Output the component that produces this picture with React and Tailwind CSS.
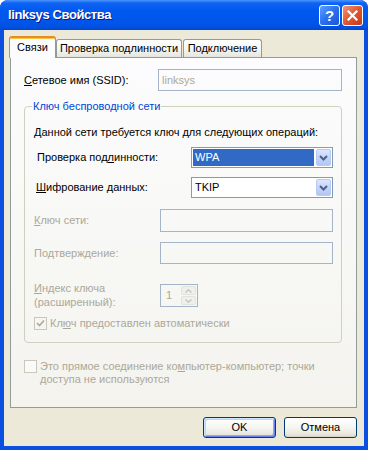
function Chevron() {
  return (
    <svg width="9" height="6" viewBox="0 0 9 6">
      <path d="M1 1 L4.5 4.5 L8 1" fill="none" stroke="#4D6185" strokeWidth="2" />
    </svg>
  );
}

function Combo({ value, selected }) {
  return (
    <div className="w-[142px] h-[21px] border border-[#7F9DB9] bg-white flex p-[1px]">
      <div
        className={
          selected
            ? "flex-1 flex items-center pl-[2px] bg-[#316AC5] text-white"
            : "flex-1 flex items-center pl-[2px] text-black"
        }
      >
        {value}
      </div>
      <div className="w-[15px] ml-[2px] rounded-[2px] border border-[#B9CAF3] bg-[linear-gradient(to_bottom,#DCE6FD_0%,#C3D3FB_50%,#B3C7F5_100%)] flex items-center justify-center">
        <Chevron />
      </div>
    </div>
  );
}

function CheckMark() {
  return (
    <svg width="9" height="9" viewBox="0 0 9 9">
      <path d="M1 4 L3.5 6.5 L8 1.5" fill="none" stroke="#ACA899" strokeWidth="1.6" />
    </svg>
  );
}

export default function App() {
  return (
    <div className="w-[368px] h-[450px] bg-white font-['Liberation_Sans',Arial,sans-serif] text-[11px] leading-[13px] text-black">
      <div className="w-full h-full flex flex-col rounded-t-[8px] overflow-hidden bg-[#0A4FE0]">
        {/* Title bar */}
        <div className="h-[30px] shrink-0 flex items-center pl-[8px] pr-[5px] bg-[linear-gradient(to_bottom,#4A96FD_0%,#0E64F4_10%,#0059EE_35%,#0056EA_70%,#0051E2_90%,#0046CC_100%)]">
          <span className="flex-1 text-white font-bold text-[13px] leading-[16px] tracking-[-0.4px] [text-shadow:1px_1px_0_#0A1883]">
            linksys Свойства
          </span>
          <div className="flex gap-[2px]">
            <div className="w-[21px] h-[21px] rounded-[3px] border border-white bg-[linear-gradient(135deg,#5EA0FF_0%,#2B6FEE_50%,#1A57D6_100%)] flex items-center justify-center">
              <span className="text-white font-bold text-[15px] leading-[15px]">?</span>
            </div>
            <div className="w-[21px] h-[21px] rounded-[3px] border border-white bg-[linear-gradient(135deg,#F0957A_0%,#E1572F_50%,#C23A18_100%)] flex items-center justify-center">
              <svg width="11" height="11" viewBox="0 0 11 11">
                <path d="M1.5 1.5 L9.5 9.5 M9.5 1.5 L1.5 9.5" stroke="white" strokeWidth="2.2" strokeLinecap="square" />
              </svg>
            </div>
          </div>
        </div>

        {/* Client area */}
        <div className="flex-1 mx-[4px] mb-[4px] bg-[#ECE9D8] flex flex-col pt-[6px] pl-[6px] pr-[7px]">
          {/* Tabs */}
          <div className="h-[21px] flex items-end -ml-[1px]">
            <div className="relative z-10 w-[47px] h-[22px] -mb-[1px] bg-[#FCFCFE] border-x border-[#919B9C] border-t-2 border-t-[#E68B2C] rounded-t-[3px] shadow-[inset_0_1px_0_#FFC73C] flex items-center justify-center pb-[1px]">
              Связи
            </div>
            <div className="w-[126px] h-[18px] bg-[linear-gradient(to_bottom,#FFFFFF_0%,#F3F3EF_60%,#E6E5DE_100%)] border-x border-t border-[#919B9C] rounded-t-[3px] flex items-center justify-center">
              Проверка подлинности
            </div>
            <div className="w-[79px] h-[18px] ml-[1px] bg-[linear-gradient(to_bottom,#FFFFFF_0%,#F3F3EF_60%,#E6E5DE_100%)] border-x border-t border-[#919B9C] rounded-t-[3px] flex items-center justify-center">
              Подключение
            </div>
          </div>

          {/* Panel */}
          <div className="h-[351px] border border-[#919B9C] bg-[linear-gradient(to_bottom,#FCFCFE_0%,#F7F7F4_60%,#F4F3EE_100%)] flex flex-col">
            <div className="mt-[11px] pl-[13px] h-[22px] flex items-center">
              <div className="w-[134px]">
                <u>С</u>етевое имя (SSID):
              </div>
              <div className="w-[184px] h-[22px] border border-[#A5B4C9] flex items-center pl-[3px] text-[#ACA899]">
                linksys
              </div>
            </div>

            <fieldset className="mt-[8px] ml-[13px] w-[318px] border border-[#D0D0BF] rounded-[4px] pl-[9px] pr-[7px] pb-[12px]">
              <legend className="-ml-[2px] px-[1px] text-[#0046D5] leading-[14px]">
                Ключ беспроводной сети
              </legend>
              <div className="mt-[12px] h-[14px] leading-[14px]">
                Данной сети требуется ключ для следующих операций:
              </div>
              <div className="mt-[8px] h-[21px] flex items-center">
                <div className="w-[157px] pl-[3px]">
                  Проверка под<u>л</u>инности:
                </div>
                <Combo value="WPA" selected />
              </div>
              <div className="mt-[9px] h-[21px] flex items-center">
                <div className="w-[157px] pl-[2px]">
                  <u>Ш</u>ифрование данных:
                </div>
                <Combo value="TKIP" />
              </div>
              <div className="mt-[11px] h-[23px] flex items-center text-[#ACA899]">
                <div className="w-[126px]">
                  <u>К</u>люч сети:
                </div>
                <div className="w-[173px] h-[23px] border border-[#A5B4C9]" />
              </div>
              <div className="mt-[10px] h-[22px] flex items-center text-[#ACA899]">
                <div className="w-[126px]">Подтверждение:</div>
                <div className="w-[173px] h-[22px] border border-[#A5B4C9]" />
              </div>
              <div className="mt-[17px] flex items-start text-[#ACA899]">
                <div className="w-[126px] leading-[14px]">
                  <u>И</u>ндекс ключа
                  <br />
                  (расширенный):
                </div>
                <div className="mt-[3px] w-[38px] h-[23px] border border-[#A5B4C9] flex items-center p-[1px]">
                  <div className="flex-1 pl-[4px]">1</div>
                  <div className="w-[15px] h-[19px] flex flex-col gap-[1px]">
                    <div className="flex-1 rounded-[2px] bg-[#EEF0EC] border border-[#E2E3DC] flex items-center justify-center">
                      <svg width="7" height="4" viewBox="0 0 7 4">
                        <path d="M0.5 3.5 L3.5 0.8 L6.5 3.5" fill="none" stroke="#C4C6BC" strokeWidth="1.4" />
                      </svg>
                    </div>
                    <div className="flex-1 rounded-[2px] bg-[#EEF0EC] border border-[#E2E3DC] flex items-center justify-center">
                      <svg width="7" height="4" viewBox="0 0 7 4">
                        <path d="M0.5 0.5 L3.5 3.2 L6.5 0.5" fill="none" stroke="#C4C6BC" strokeWidth="1.4" />
                      </svg>
                    </div>
                  </div>
                </div>
              </div>
              <div className="mt-[8px] h-[13px] flex items-center text-[#ACA899]">
                <div className="w-[13px] h-[13px] border border-[#CAC8BB] bg-[#F6F5F1] flex items-center justify-center">
                  <CheckMark />
                </div>
                <div className="ml-[3px]">
                  Кл<u>ю</u>ч предоставлен автоматически
                </div>
              </div>
            </fieldset>

            <div className="mt-[17px] pl-[13px] flex items-start text-[#ACA899]">
              <div className="w-[13px] h-[13px] shrink-0 border border-[#CAC8BB] bg-[#FAFAF8]" />
              <div className="ml-[3px] leading-[13px]">
                Это прямое соединение ко<u>м</u>пьютер-компьютер; точки
                <br />
                доступа не используются
              </div>
            </div>
          </div>

          {/* Buttons */}
          <div className="mt-[9px] flex justify-end gap-[8px]">
            <button className="w-[73px] h-[21px] rounded-[3px] border border-[#003C74] bg-[linear-gradient(to_bottom,#FFFFFF_0%,#F5F5F1_50%,#E9E7DE_85%,#D8D2C4_100%)] shadow-[inset_1px_1px_0_#CEE7FF,inset_-1px_-1px_0_#6982EE,inset_2px_2px_0_#BCD4F6,inset_-2px_-2px_0_#89ADE4] text-black">
              OK
            </button>
            <button className="w-[73px] h-[21px] rounded-[3px] border border-[#003C74] bg-[linear-gradient(to_bottom,#FFFFFF_0%,#F5F5F1_50%,#E9E7DE_85%,#D8D2C4_100%)] text-black">
              Отмена
            </button>
          </div>
        </div>
      </div>
    </div>
  );
}
